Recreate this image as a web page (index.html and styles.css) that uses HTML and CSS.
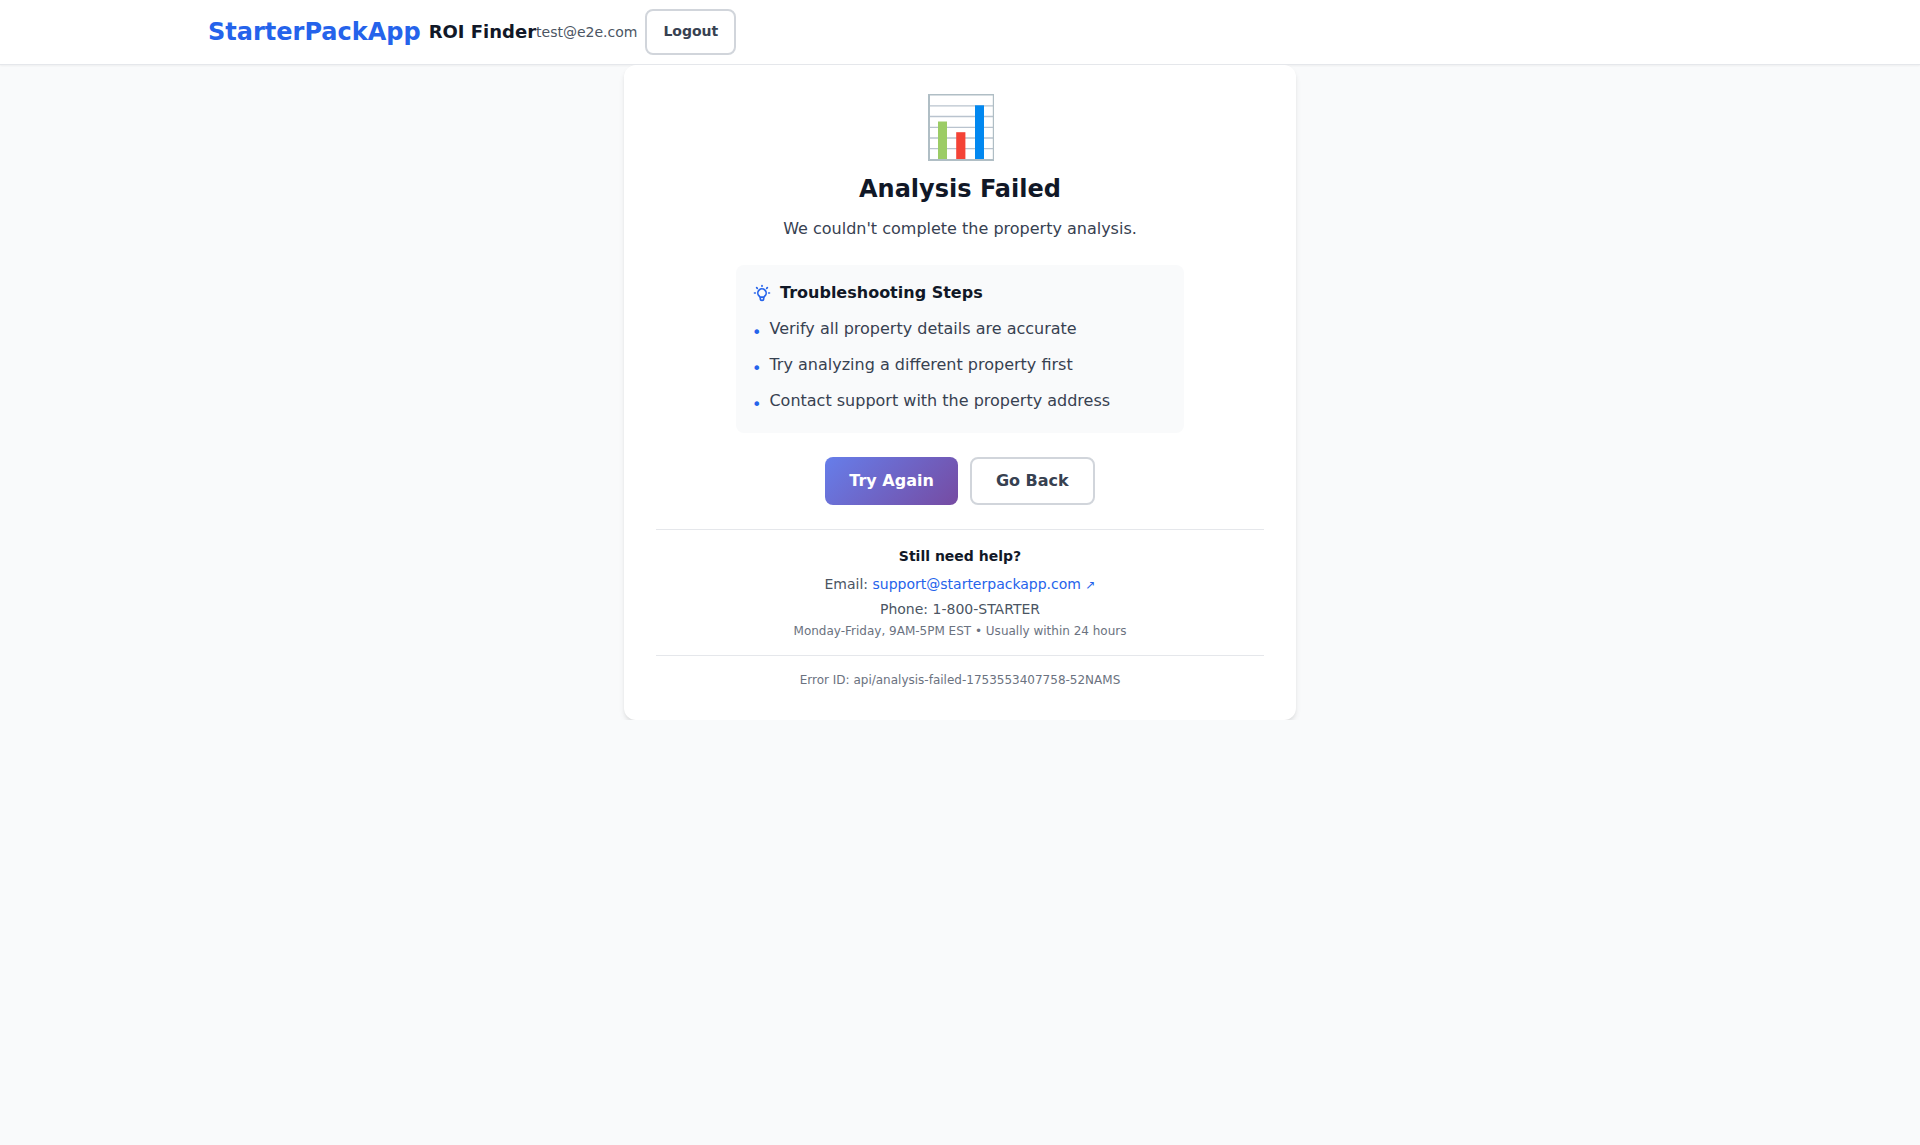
FILE: index.html
```html
<!DOCTYPE html>
<html lang="en">
<head>
  <meta charset="utf-8">
  <meta name="viewport" content="width=device-width, initial-scale=1">
  <title>StarterPackApp ROI Finder</title>
  <link rel="stylesheet" href="styles.css">
</head>
<body>
  <header class="site-header">
    <div class="header-inner">
      <div class="brand">
        <span class="brand-name">StarterPackApp</span>
        <span class="brand-product">ROI Finder</span>
      </div>
      <div class="account">
        <span class="account-email">test@e2e.com</span>
        <button type="button" class="btn btn-outline btn-small">Logout</button>
      </div>
    </div>
  </header>

  <main class="content">
    <section class="error-card">
      <svg class="chart-icon" viewBox="0 0 72 72" role="img" aria-label="Bar chart">
        <path fill="#fff" d="M4 5h66v67H4z"/>
        <path fill="none" stroke="#b9c3ce" stroke-width="1.3" d="M6 16.8h63M6 27.5h63M6 38.3h63M6 49h63M6 59.7h63"/>
        <path fill="#b0bec5" d="M4 5h66v67H4zM6 6.5V70h62.8V6.5z" fill-rule="evenodd"/>
        <path fill="#9ccc65" d="M14 32.5h9V70h-9z"/>
        <path fill="#f44336" d="M32.2 43.2h9.2V70h-9.2z"/>
        <path fill="#0288f0" d="M51 16.3h9V70h-9z"/>
      </svg>
      <h1 class="error-title">Analysis Failed</h1>
      <p class="error-message">We couldn't complete the property analysis.</p>

      <div class="steps">
        <h2 class="steps-title">
          <svg class="bulb-icon" viewBox="0 0 24 24" aria-hidden="true">
            <path d="M9.663 17h4.673M12 3v1m6.364 1.636l-.707.707M21 12h-1M4 12H3m3.343-5.657l-.707-.707m2.828 9.9a5 5 0 117.072 0l-.548.547A3.374 3.374 0 0014 18.469V19a2 2 0 11-4 0v-.531c0-.895-.356-1.754-.988-2.386l-.548-.547z"/>
          </svg>
          Troubleshooting Steps
        </h2>
        <ul class="steps-list">
          <li>Verify all property details are accurate</li>
          <li>Try analyzing a different property first</li>
          <li>Contact support with the property address</li>
        </ul>
      </div>

      <div class="actions">
        <button type="button" class="btn btn-primary">Try Again</button>
        <button type="button" class="btn btn-outline">Go Back</button>
      </div>

      <div class="help">
        <h2 class="help-title">Still need help?</h2>
        <p class="help-line">Email: <a href="mailto:support@starterpackapp.com">support@starterpackapp.com <span class="arrow">↗</span></a></p>
        <p class="help-line">Phone: 1-800-STARTER</p>
        <p class="help-hours">Monday-Friday, 9AM-5PM EST • Usually within 24 hours</p>
      </div>

      <p class="error-id">Error ID: api/analysis-failed-1753553407758-52NAMS</p>
    </section>
  </main>
</body>
</html>
```
FILE: styles.css
```css
*,
*::before {
  box-sizing: border-box;
}

body {
  margin: 0;
  background: #f9fafb;
  color: #111827;
  font-family: "DejaVu Sans", sans-serif;
  font-size: 16px;
  line-height: 24px;
}

h1, h2, p, ul {
  margin: 0;
  padding: 0;
}

.site-header {
  background: #fff;
  border-bottom: 1px solid #e5e7eb;
  box-shadow: 0 1px 2px rgba(0, 0, 0, 0.05);
}

.header-inner {
  display: flex;
  align-items: center;
  max-width: 1536px;
  min-height: 64px;
  margin: 0 auto;
  padding: 8px 16px;
}

.brand,
.account {
  display: flex;
  align-items: center;
  gap: 8px;
}

.brand-name {
  color: #2563eb;
  font-size: 24px;
  font-weight: 700;
  line-height: 32px;
}

.brand-product {
  font-size: 18px;
  font-weight: 600;
}

.account-email {
  color: #4b5563;
  font-size: 14px;
}

.btn {
  min-height: 48px;
  padding: 0 24px;
  border: 0;
  border-radius: 8px;
  font: inherit;
  font-weight: 600;
  cursor: pointer;
}

.btn-outline {
  border: 2px solid #d1d5db;
  background: #fff;
  color: #374151;
}

.btn-small {
  min-height: 46px;
  padding: 0 16px 2px;
  font-size: 14px;
}

.btn-primary {
  background: linear-gradient(135deg, #667eea 0%, #764ba2 100%);
  color: #fff;
}

.content {
  overflow: hidden;
}

.error-card {
  display: flex;
  flex-direction: column;
  align-items: center;
  max-width: 672px;
  margin: 0 auto;
  padding: 24px 32px 32px;
  border-radius: 12px;
  background: #fff;
  box-shadow: 0 4px 6px -1px rgba(0, 0, 0, 0.1), 0 2px 4px -1px rgba(0, 0, 0, 0.06);
  text-align: center;
}

.chart-icon {
  width: 72px;
  height: 72px;
  margin-bottom: 12px;
}

.error-title {
  margin-bottom: 12px;
  font-size: 24px;
  font-weight: 700;
  line-height: 32px;
}

.error-message {
  margin-bottom: 24px;
  color: #374151;
}

.steps {
  width: 100%;
  max-width: 448px;
  margin-bottom: 24px;
  padding: 16px;
  border-radius: 8px;
  background: #f9fafb;
  text-align: left;
}

.steps-title {
  display: flex;
  align-items: center;
  gap: 8px;
  margin-bottom: 12px;
  font-size: 16px;
  font-weight: 600;
}

.bulb-icon {
  width: 20px;
  height: 20px;
  fill: none;
  stroke: #2563eb;
  stroke-width: 2;
  stroke-linecap: round;
  stroke-linejoin: round;
}

.steps-list {
  display: grid;
  gap: 8px;
  color: #374151;
  list-style: none;
}

.steps-list li {
  display: flex;
  gap: 8px;
}

.steps-list li::before {
  content: "•";
  margin-top: 4px;
  color: #2563eb;
}

.actions {
  display: flex;
  flex-wrap: wrap;
  justify-content: center;
  gap: 12px;
  margin-bottom: 24px;
}

.help,
.error-id {
  width: 100%;
  padding-top: 16px;
  border-top: 1px solid #e5e7eb;
}

.help {
  margin-bottom: 16px;
  font-size: 14px;
  line-height: 20px;
}

.help-title {
  margin-bottom: 8px;
  font-size: 14px;
  font-weight: 600;
}

.help-line {
  margin-bottom: 4px;
  color: #4b5563;
}

.help-line a {
  color: #2563eb;
  text-decoration: none;
}

.arrow {
  font-size: 12px;
}

.help-hours,
.error-id {
  color: #6b7280;
  font-size: 12px;
  line-height: 16px;
}
```
